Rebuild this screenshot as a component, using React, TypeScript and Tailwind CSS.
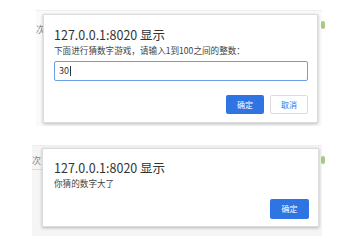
import React from "react";

const font = { fontFamily: '"Noto Sans CJK SC", "Liberation Sans", sans-serif' };

function Title() {
  return (
    <div className="text-[12.5px] leading-[13px] text-[#333]">127.0.0.1:8020 显示</div>
  );
}

export default function App() {
  return (
    <div className="w-[347px] h-[246px] bg-white relative overflow-hidden" style={font}>
      {/* first page behind */}
      <div className="absolute left-[36px] top-[10px] w-[286px] h-[116px] bg-[#fafafa] border-t border-[#eeeeee]">
        <span className="absolute left-0 top-[12px] text-[9px] text-[#888]">次</span>
        <span className="absolute right-[-3px] top-[10px] w-[4px] h-[8px] rounded-full bg-[#a9c883]" />
      </div>
      {/* prompt dialog */}
      <div className="absolute left-[43px] top-[14px] w-[275px] h-[109px] bg-white border border-[#dcdcdc] shadow-[0_1px_3px_rgba(0,0,0,0.25)] flex flex-col pl-[10px] pr-[9px] pt-[13px]">
        <Title />
        <div className="mt-[4px] text-[8.6px] leading-[11px] text-[#444]">下面进行猜数字游戏，请输入1到100之间的整数：</div>
        <div className="mt-[5px] h-[20px] border border-[#6a9ee8] rounded-[2px] flex items-center pl-[4px] text-[9px] text-[#333]">
          30<span className="w-px h-[10px] bg-[#333] ml-px" />
        </div>
        <div className="mt-[14px] flex justify-end gap-[6px]">
          <div className="w-[38px] h-[19px] rounded-[2px] bg-[#2f74e3] text-white text-[8px] flex items-center justify-center">确定</div>
          <div className="w-[38px] h-[19px] rounded-[2px] bg-white border border-[#dadce0] text-[#2f74e3] text-[8px] flex items-center justify-center">取消</div>
        </div>
      </div>

      {/* second page behind */}
      <div className="absolute left-[32px] top-[145px] w-[290px] h-[91px] bg-[#f5f5f5] border-t border-[#eeeeee]">
        <span className="absolute left-0 top-[8px] text-[9px] text-[#888]">次</span>
        <span className="absolute left-0 top-[23px] w-[10px] h-px bg-[#ddd]" />
        <span className="absolute right-[-3px] top-[10px] w-[4px] h-[8px] rounded-full bg-[#a9c883]" />
      </div>
      {/* alert dialog */}
      <div className="absolute left-[42px] top-[148px] w-[277px] h-[79px] bg-white border border-[#dcdcdc] shadow-[0_1px_3px_rgba(0,0,0,0.25)] flex flex-col pl-[11px] pr-[9px] pt-[12px]">
        <Title />
        <div className="mt-[4px] text-[8.6px] leading-[11px] text-[#444]">你猜的数字大了</div>
        <div className="mt-[10px] flex justify-end">
          <div className="w-[39px] h-[20px] rounded-[2px] bg-[#2f74e3] text-white text-[8px] flex items-center justify-center">确定</div>
        </div>
      </div>
    </div>
  );
}
